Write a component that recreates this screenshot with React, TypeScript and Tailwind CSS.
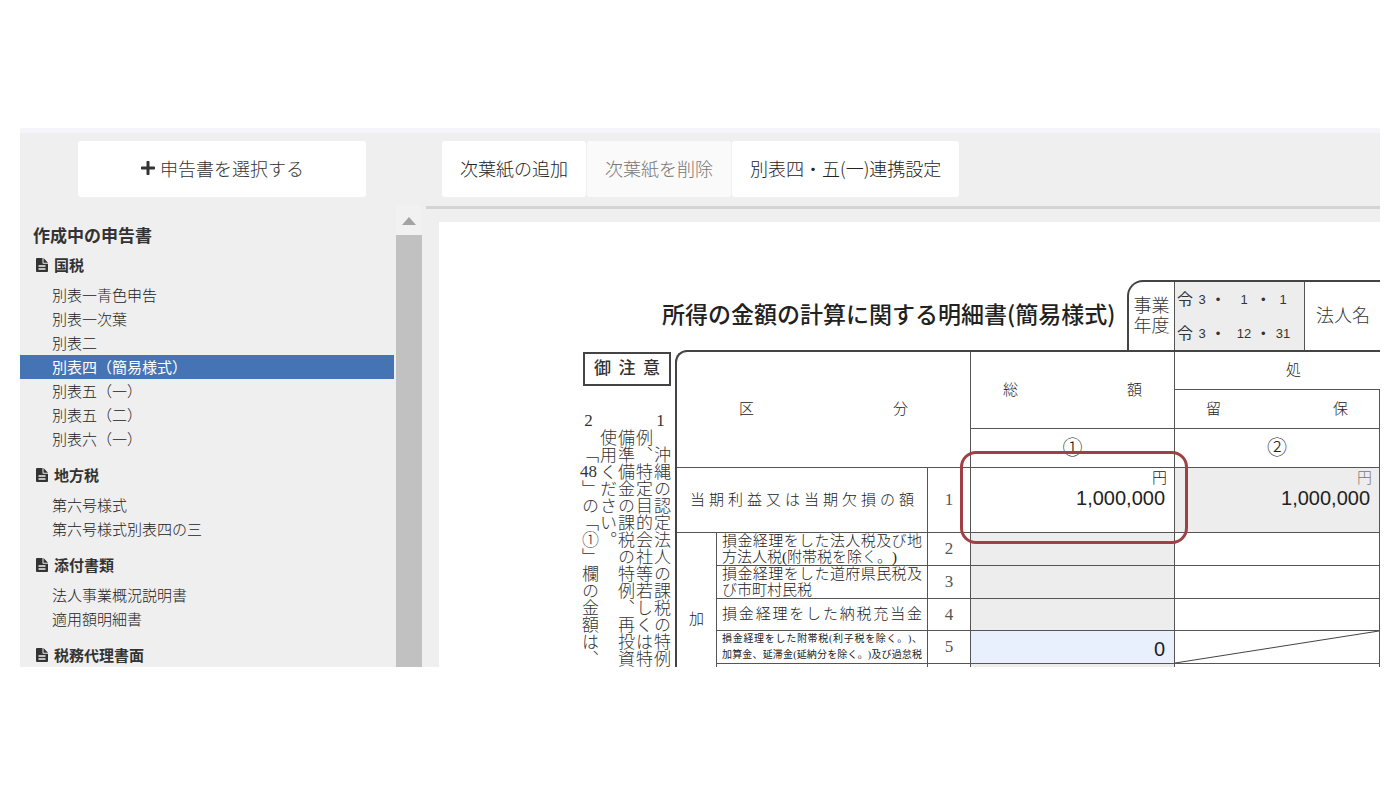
import type { ReactNode } from "react"
import { FaPlus } from "react-icons/fa"

type Section = { title: string; items: string[] }

const sections: Section[] = [
  {
    title: "国税",
    items: [
      "別表一青色申告",
      "別表一次葉",
      "別表二",
      "別表四（簡易様式）",
      "別表五（一）",
      "別表五（二）",
      "別表六（一）",
    ],
  },
  { title: "地方税", items: ["第六号様式", "第六号様式別表四の三"] },
  { title: "添付書類", items: ["法人事業概況説明書", "適用額明細書"] },
  { title: "税務代理書面", items: [] },
]

const activeItem = "別表四（簡易様式）"

const tools = [
  { label: "次葉紙の追加", disabled: false },
  { label: "次葉紙を削除", disabled: true },
  { label: "別表四・五(一)連携設定", disabled: false },
]

const periods = [
  ["令", "3", "1", "1"],
  ["令", "3", "12", "31"],
]

function FileIcon() {
  return (
    <svg viewBox="0 0 12 14" className="h-[14px] w-3 shrink-0" aria-hidden="true">
      <path d="M0 1a1 1 0 0 1 1-1h5.500v5a.8.8 0 0 0 .8.800H12V13a1 1 0 0 1-1 1H1a1 1 0 0 1-1-1z" fill="#333" />
      <path d="M7.500 0L12 4.800H7.500z" fill="#333" />
      <path d="M2.500 8h7M2.500 11h7" stroke="#efefef" strokeWidth="1.300" />
    </svg>
  )
}

function Sidebar() {
  return (
    <aside className="flex w-[406px] shrink-0 flex-col">
      <div className="pt-2 pr-[60px] pl-[58px]">
        <button className="flex h-14 w-full items-center justify-center gap-1 rounded-[3px] bg-white pb-[2px] text-lg font-light">
          <FaPlus className="size-4" />
          申告書を選択する
        </button>
      </div>

      <div className="mt-2 flex min-h-0 flex-1 pr-1">
        <nav className="min-w-0 flex-1 overflow-hidden pt-[18px]">
          <h2 className="pl-[13px] text-[17px] leading-6 font-bold">作成中の申告書</h2>
          {sections.map((s, i) => (
            <section key={s.title} className={i === 0 ? "mt-[6px]" : "mt-3"}>
              <h3 className="flex items-center gap-[6px] pl-4 text-[15px] leading-6 font-bold">
                <FileIcon />
                {s.title}
              </h3>
              <ul className="mt-[6px]">
                {s.items.map((item) => (
                  <li key={item}>
                    <a
                      href="#"
                      className={`mr-[2px] block pl-8 text-[15px] leading-6 [text-spacing-trim:space-all] ${
                        item === activeItem ? "bg-[#4574b4] text-white" : "font-light text-[#222]"
                      }`}
                    >
                      {item}
                    </a>
                  </li>
                ))}
              </ul>
            </section>
          ))}
        </nav>

        {/* Scrollbar */}
        <div className="flex w-[26px] flex-col items-center bg-[#f1f1f1]">
          <div className="flex h-[30px] items-center pt-[2px]">
            <svg viewBox="0 0 14 8" className="h-2 w-[14px]" aria-hidden="true">
              <path d="M7 0l7 8H0z" fill="#a3a3a3" />
            </svg>
          </div>
          <div className="w-full flex-1 bg-[#c1c1c1]" />
        </div>
      </div>
    </aside>
  )
}

function Spread({ children, className }: { children: string; className: string }) {
  return (
    <div className={`flex justify-between ${className}`}>
      {Array.from(children).map((c, i) => (
        <span key={i}>{c}</span>
      ))}
    </div>
  )
}

function FormHeader() {
  return (
    <div className="flex h-[70px]">
      <h1 className="flex w-[544px] shrink-0 items-center pb-1 pl-[79px] font-['Noto_Sans_CJK_JP',sans-serif] text-[23px] font-medium whitespace-nowrap text-[#222]">
        所得の金額の計算に関する明細書(簡易様式)
      </h1>
      <div className="flex flex-1 rounded-tl-2xl border-t-2 border-l-2 border-[#444]">
        <div className="flex w-[46px] shrink-0 items-center justify-center border-r border-[#555] text-lg leading-5 font-light">
          <div>
            事業
            <br />
            年度
          </div>
        </div>
        <div className="flex w-[130px] shrink-0 flex-col gap-px border-r border-[#555] bg-[#ededed] pt-px">
          {periods.map(([era, y, m, d]) => (
            <div
              key={m}
              className="grid h-[34px] grid-cols-[20px_14px_18px_34px_4px_36px] items-center text-center font-['Liberation_Sans','Noto_Sans_CJK_JP',sans-serif] text-[13px]"
            >
              <span className="text-base">{era}</span>
              <span>{y}</span>
              <span>•</span>
              <span>{m}</span>
              <span>•</span>
              <span>{d}</span>
            </div>
          ))}
        </div>
        <div className="flex items-center pl-[11px] text-lg font-light whitespace-nowrap">法人名</div>
      </div>
    </div>
  )
}

function Notes() {
  return (
    <div className="w-[92px] shrink-0 pt-[2px]">
      <div className="mr-1 border-2 border-[#444] px-[9px]">
        <Spread className="text-[17px] leading-[30px] font-medium">御注意</Spread>
      </div>
      <div className="mr-[6px] flex flex-row-reverse pt-[26px] text-[17px] leading-[18px] font-light whitespace-nowrap">
        <div className="[writing-mode:vertical-rl]">
          <p>
            <span className="[text-combine-upright:all]">1</span>　沖縄の認定法人の課税の特例
          </p>
          <p className="pt-[17px]">例、特定目的会社等若しくは特</p>
          <p className="pt-[17px]">備準備金の課税の特例、再投資</p>
          <p className="pt-[17px]">使用ください。</p>
          <p>
            <span className="[text-combine-upright:all]">2</span>　「
            <span className="[text-combine-upright:all]">48</span>」の「①」欄の金額は、
          </p>
        </div>
      </div>
    </div>
  )
}

function Cell({
  children,
  className = "",
  colSpan,
  rowSpan,
}: {
  children?: ReactNode
  className?: string
  colSpan?: number
  rowSpan?: number
}) {
  return (
    <td colSpan={colSpan} rowSpan={rowSpan} className={`border-r border-b border-[#555] p-0 ${className}`}>
      {children}
    </td>
  )
}

function RowNumber({ n }: { n: number }) {
  return <Cell className="text-center text-[17px] text-[#555]">{n}</Cell>
}

function Amount({ label, value, readOnly }: { label: string; value: string; readOnly?: boolean }) {
  return (
    <input
      aria-label={label}
      defaultValue={value}
      readOnly={readOnly}
      className="block w-full bg-transparent pr-[9px] text-right font-['Liberation_Sans',sans-serif] text-xl leading-6 text-[#222] outline-none"
    />
  )
}

const line = "block whitespace-nowrap [text-align-last:justify]"

function FormTable() {
  return (
    <table className="w-[703px] table-fixed border-separate border-spacing-0 text-[15px] font-light text-[#222]">
      <colgroup>
        <col className="w-10" />
        <col className="w-[211px]" />
        <col className="w-[43px]" />
        <col className="w-[204px]" />
        <col className="w-[205px]" />
      </colgroup>
      <tbody>
        <tr className="h-[38px]">
          <Cell colSpan={3} rowSpan={3}>
            <Spread className="px-[62px]">区分</Spread>
          </Cell>
          <Cell rowSpan={2}>
            <Spread className="px-8">総額</Spread>
          </Cell>
          <td className="border-b border-[#555] p-0 pl-8 text-center">処</td>
        </tr>
        <tr className="h-[39px]">
          <Cell>
            <Spread className="px-[31px]">留保</Spread>
          </Cell>
        </tr>
        <tr className="h-[39px] text-center text-xl leading-6">
          <Cell>①</Cell>
          <Cell>②</Cell>
        </tr>
        <tr className="h-[65px]">
          <Cell colSpan={2} className="px-[13px]">
            <span className={line}>当期利益又は当期欠損の額</span>
          </Cell>
          <RowNumber n={1} />
          <Cell className="relative align-top">
            <div className="pt-[2px] pr-[7px] text-right leading-4">円</div>
            <Amount label="当期利益 総額" value="1,000,000" />
            <div className="pointer-events-none absolute -top-[17px] -right-[14px] -bottom-3 -left-[11px] z-10 rounded-2xl border-3 border-[#a04044]" />
          </Cell>
          <Cell className="bg-[#ededed] align-top">
            <div className="pt-[2px] pr-[7px] text-right leading-4 text-[#777]">円</div>
            <Amount label="当期利益 留保" value="1,000,000" readOnly />
          </Cell>
        </tr>
        <tr className="h-[33px]">
          <Cell rowSpan={5} className="text-center">
            加
          </Cell>
          <Cell className="px-[5px] leading-4">
            <span className={line}>損金経理をした法人税及び地</span>
            方法人税(附帯税を除く。)
          </Cell>
          <RowNumber n={2} />
          <Cell className="bg-[#ededed]" />
          <Cell />
        </tr>
        <tr className="h-[33px]">
          <Cell className="px-[5px] leading-4">
            <span className={line}>損金経理をした道府県民税及</span>
            び市町村民税
          </Cell>
          <RowNumber n={3} />
          <Cell className="bg-[#ededed]" />
          <Cell />
        </tr>
        <tr className="h-8">
          <Cell className="px-[5px]">
            <span className={line}>損金経理をした納税充当金</span>
          </Cell>
          <RowNumber n={4} />
          <Cell className="bg-[#ededed]" />
          <Cell />
        </tr>
        <tr className="h-[33px]">
          <Cell className="px-[5px] text-[10px] leading-4 font-normal">
            <span className={line}>損金経理をした附帯税(利子税を除く。)、</span>
            <span className={line}>加算金、延滞金(延納分を除く。)及び過怠税</span>
          </Cell>
          <RowNumber n={5} />
          <Cell className="bg-[#e8f0fe] pt-1">
            <Amount label="附帯税 総額" value="0" />
          </Cell>
          <Cell>
            <svg viewBox="0 0 204 32" preserveAspectRatio="none" className="block h-8 w-full" aria-hidden="true">
              <path d="M0 32L204 0" stroke="#444" strokeWidth="1" />
            </svg>
          </Cell>
        </tr>
        <tr className="h-[43px]">
          <Cell />
          <Cell />
          <Cell className="bg-[#ededed]" />
          <Cell />
        </tr>
      </tbody>
    </table>
  )
}

export default function App() {
  return (
    <div className="h-screen bg-white px-5 pt-32 pb-[133px] font-['Noto_Sans_CJK_JP',sans-serif] text-[#333]">
      <div className="flex h-full overflow-hidden border-t-5 border-[#f4f4fa] bg-[#efefef]">
        <Sidebar />
        <main className="flex min-w-0 flex-1 flex-col">
          <div className="flex gap-px border-b-3 border-[#d4d4d4] pt-2 pb-[9px] pl-4">
            {tools.map((t) => (
              <button
                key={t.label}
                disabled={t.disabled}
                className={`h-14 shrink-0 rounded-[3px] px-[18px] pb-[2px] text-lg font-light ${
                  t.disabled ? "bg-[#fafafa] text-[#777]" : "bg-white text-[#222]"
                }`}
              >
                {t.label}
              </button>
            ))}
          </div>
          <div className="mt-[13px] ml-[13px] min-h-0 flex-1 overflow-hidden bg-white pt-[58px] pl-36 font-['Liberation_Serif','Noto_Sans_CJK_JP',serif] [text-spacing-trim:space-all]">
            <FormHeader />
            <div className="flex">
              <Notes />
              <div className="min-w-0 flex-1 rounded-tl-xl border-t-2 border-l-2 border-[#444]">
                <FormTable />
              </div>
            </div>
          </div>
        </main>
      </div>
    </div>
  )
}
